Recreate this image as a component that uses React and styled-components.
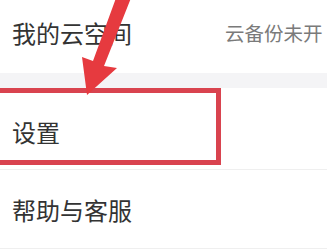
import React from "react";
import styled, { createGlobalStyle } from "styled-components";

const Global = createGlobalStyle`
  html, body {
    margin: 0;
    padding: 0;
    background: #ffffff;
  }
  body {
    font-family: "Noto Sans CJK SC", "Noto Sans", sans-serif;
    overflow: hidden;
  }
`;

const Screen = styled.div`
  position: relative;
  width: 327px;
  height: 250px;
  overflow: hidden;
  background: #fff;
`;

const Row = styled.div`
  display: flex;
  align-items: center;
  justify-content: space-between;
  height: ${({ h }) => h}px;
  padding-left: 12px;
  padding-top: ${({ drop }) => drop || 0}px;
  padding-bottom: ${({ lift }) => lift || 0}px;
  box-sizing: border-box;
  border-bottom: ${({ line }) => (line ? "1px solid #efefef" : "none")};
  background: #fff;
`;

const Label = styled.span`
  font-size: 24px;
  color: #333;
  white-space: nowrap;
`;

const Hint = styled.span`
  font-size: 19.5px;
  color: #7a7a7a;
  white-space: nowrap;
  margin-left: auto;
  width: 102px;
  overflow: hidden;
`;

const Gap = styled.div`
  height: 15px;
  background: #f4f4f6;
`;

// annotation drawn over the screenshot
const Highlight = styled.div`
  position: absolute;
  left: -10px;
  top: 88px;
  width: 231px;
  height: 77px;
  box-sizing: border-box;
  border: 5px solid #d9434f;
  pointer-events: none;
`;

const Arrow = styled.svg`
  position: absolute;
  left: 0;
  top: 0;
  pointer-events: none;
`;

export default function App() {
  return (
    <>
      <Global />
      <Screen>
        <Row h={73} lift={9}>
          <Label>我的云空间</Label>
          <Hint>云备份未开</Hint>
        </Row>
        <Gap />
        <Row h={82} line drop={6}>
          <Label>设置</Label>
        </Row>
        <Row h={79} line>
          <Label>帮助与客服</Label>
        </Row>
        <Highlight />
        <Arrow width="327" height="250" viewBox="0 0 327 250">
          <polygon
            points="87,95 82,57 93,61 116,-2 131,-2 104,66 117,68"
            fill="#e63a3f"
          />
        </Arrow>
      </Screen>
    </>
  );
}
